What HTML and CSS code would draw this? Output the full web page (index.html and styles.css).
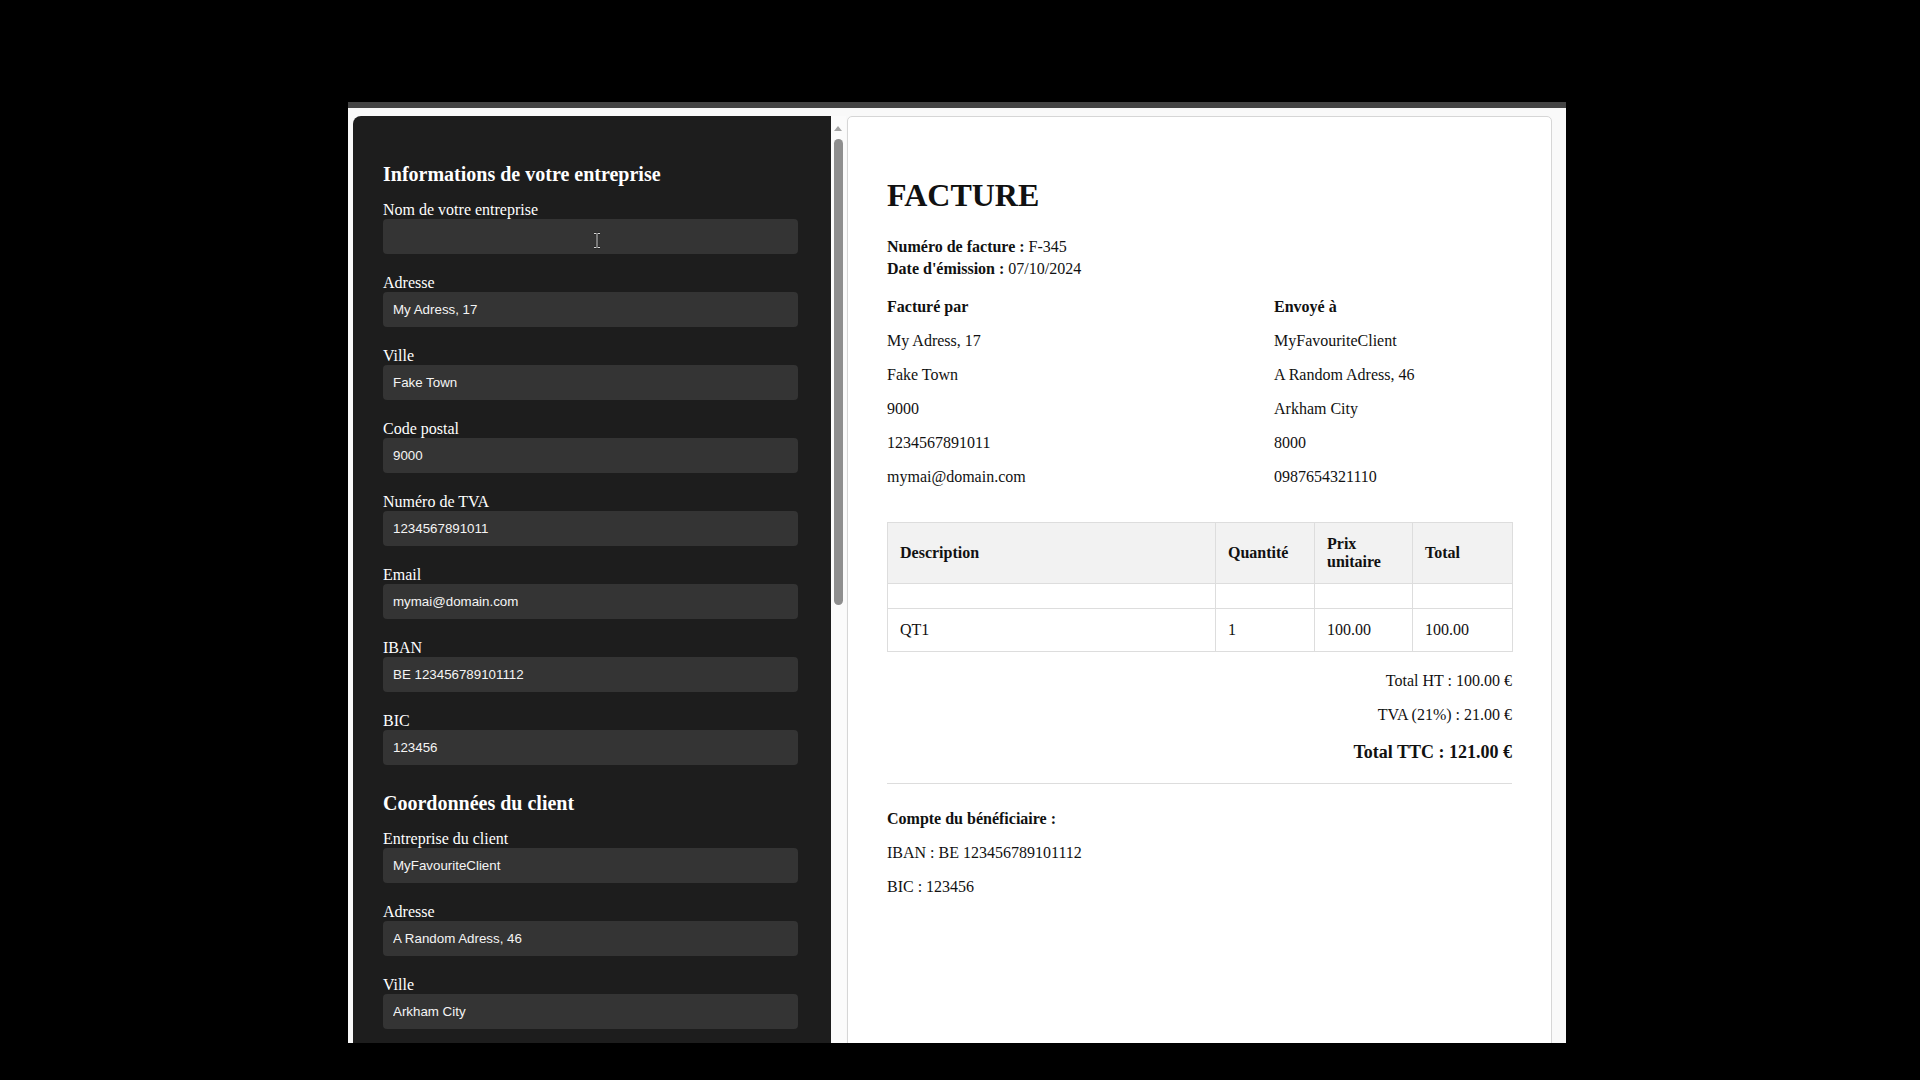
FILE: index.html
```html
<!DOCTYPE html>
<html lang="fr">
<head>
<meta charset="utf-8">
<title>Facture</title>
<link rel="stylesheet" href="styles.css">
</head>
<body>
<div class="window">
  <div class="topbar"></div>
  <div class="content">
    <div class="left-pane">
      <form class="form-panel">
        <section class="form-section">
          <h2>Informations de votre entreprise</h2>
          <label>Nom de votre entreprise</label>
          <input type="text" value="">
          <label>Adresse</label>
          <input type="text" value="My Adress, 17">
          <label>Ville</label>
          <input type="text" value="Fake Town">
          <label>Code postal</label>
          <input type="text" value="9000">
          <label>Numéro de TVA</label>
          <input type="text" value="1234567891011">
          <label>Email</label>
          <input type="text" value="mymai@domain.com">
          <label>IBAN</label>
          <input type="text" value="BE 123456789101112">
          <label>BIC</label>
          <input type="text" value="123456">
        </section>
        <section class="form-section">
          <h2>Coordonnées du client</h2>
          <label>Entreprise du client</label>
          <input type="text" value="MyFavouriteClient">
          <label>Adresse</label>
          <input type="text" value="A Random Adress, 46">
          <label>Ville</label>
          <input type="text" value="Arkham City">
        </section>
      </form>
      <div class="scrollbar">
        <div class="scroll-arrow"></div>
        <div class="scroll-thumb"></div>
      </div>
    </div>
    <div class="invoice">
      <h1>FACTURE</h1>
      <div class="meta">
        <p><strong>Numéro de facture :</strong> F-345</p>
        <p><strong>Date d'émission :</strong> 07/10/2024</p>
      </div>
      <div class="parties">
        <div class="party">
          <h3>Facturé par</h3>
          <p>My Adress, 17</p>
          <p>Fake Town</p>
          <p>9000</p>
          <p>1234567891011</p>
          <p>mymai@domain.com</p>
        </div>
        <div class="party">
          <h3>Envoyé à</h3>
          <p>MyFavouriteClient</p>
          <p>A Random Adress, 46</p>
          <p>Arkham City</p>
          <p>8000</p>
          <p>0987654321110</p>
        </div>
      </div>
      <table class="items">
        <colgroup>
          <col class="c-desc">
          <col class="c-qty">
          <col class="c-price">
          <col class="c-total">
        </colgroup>
        <thead>
          <tr><th>Description</th><th>Quantité</th><th>Prix unitaire</th><th>Total</th></tr>
        </thead>
        <tbody>
          <tr><td></td><td></td><td></td><td></td></tr>
          <tr><td>QT1</td><td>1</td><td>100.00</td><td>100.00</td></tr>
        </tbody>
      </table>
      <div class="totals">
        <p>Total HT : 100.00 €</p>
        <p>TVA (21%) : 21.00 €</p>
        <p class="ttc">Total TTC : 121.00 €</p>
      </div>
      <hr class="sep">
      <div class="payment">
        <p><strong>Compte du bénéficiaire :</strong></p>
        <p>IBAN : BE 123456789101112</p>
        <p>BIC : 123456</p>
      </div>
    </div>
  </div>
  <svg class="cursor" width="8" height="17" viewBox="0 0 8 17" aria-hidden="true">
    <path d="M1 1.5h2.5M4.5 1.5H7M4 2v13M1 15.5h2.5M4.5 15.5H7" stroke="#1a1a1a" stroke-width="2.2" fill="none"/>
    <path d="M1 1.5h2.5M4.5 1.5H7M4 2v13M1 15.5h2.5M4.5 15.5H7" stroke="#d8d8d8" stroke-width="1" fill="none"/>
  </svg>
</div>
</body>
</html>
```

FILE: styles.css
```css
html, body {
  margin: 0;
  padding: 0;
  background: #000;
}

.window {
  position: relative;
  margin: 102px 0 0 348px;
  width: 1218px;
  height: 941px;
  overflow: hidden;
  background: #f9f9f9;
}

.topbar {
  height: 6px;
  background: #444;
}

.content {
  display: flex;
  padding: 8px 14px 0 5px;
}

.left-pane {
  display: flex;
}

.form-panel {
  width: 478px;
  min-height: 1500px;
  box-sizing: border-box;
  background: #1d1d1d;
  border-radius: 8px 0 0 0;
  padding: 30px 33px 40px 30px;
  color: #fff;
  font-family: "Liberation Serif", "Times New Roman", serif;
}

.form-section h2 {
  font-size: 20px;
  line-height: 23px;
  font-weight: bold;
  margin: 16.6px 0 15px;
}

.form-section + .form-section h2 {
  margin-top: 27px;
}

.form-panel label {
  display: block;
  font-size: 16px;
  line-height: 18px;
}

.form-panel input {
  display: block;
  width: 100%;
  height: 35px;
  box-sizing: border-box;
  margin: 0 0 20px;
  padding: 0 10px;
  border: none;
  border-radius: 4px;
  background: #343434;
  color: #f4f4f4;
  font-family: "Liberation Sans", Arial, sans-serif;
  font-size: 13.333px;
  outline: none;
}

.scrollbar {
  width: 15px;
  background: #fbfbfb;
  padding-top: 10px;
  box-sizing: border-box;
}

.scroll-arrow {
  width: 0;
  height: 0;
  margin-left: 3px;
  border-left: 4.5px solid transparent;
  border-right: 4.5px solid transparent;
  border-bottom: 5px solid #a3a3a3;
}

.scroll-thumb {
  width: 9px;
  height: 466px;
  margin: 8px 0 0 3px;
  border-radius: 5px;
  background: #8e8e8e;
}

.invoice {
  width: 705px;
  box-sizing: border-box;
  margin-left: 1px;
  padding: 39px;
  background: #fff;
  border: 1px solid #d6d6d6;
  border-radius: 5px;
  color: #111;
  font-family: "Liberation Serif", "Times New Roman", serif;
  font-size: 16px;
}

.invoice h1 {
  font-size: 32px;
  font-weight: bold;
  margin: 21.44px 0;
}

.meta {
  margin-bottom: 18px;
}

.meta p {
  margin: 0;
  line-height: 22px;
}

.parties {
  display: grid;
  grid-template-columns: 387px 1fr;
  margin-bottom: 20px;
}

.party h3 {
  font-size: 16px;
  font-weight: bold;
  line-height: 18px;
  margin: 0 0 16px;
}

.party p {
  margin: 0 0 16px;
  line-height: 18px;
}

.items {
  width: 100%;
  border-collapse: collapse;
  table-layout: fixed;
}

.c-desc { width: 328px; }
.c-qty { width: 99px; }
.c-price { width: 98px; }
.c-total { width: 100px; }

.items th,
.items td {
  border: 1px solid #ddd;
  padding: 12px;
  text-align: left;
  line-height: 18px;
}

.items th {
  background: #f2f2f2;
  font-weight: bold;
}

.totals {
  text-align: right;
  margin-top: 20px;
}

.totals p {
  margin: 16px 0;
  line-height: 18px;
}

.totals .ttc {
  font-size: 18px;
  font-weight: bold;
  line-height: normal;
  margin: 18px 0;
}

.sep {
  border: none;
  border-top: 1px solid #ddd;
  margin: 20px 0;
}

.payment {
  margin-top: 26px;
}

.payment p {
  margin: 16px 0;
  line-height: 18px;
}

.cursor {
  position: absolute;
  left: 245px;
  top: 130px;
}
```
